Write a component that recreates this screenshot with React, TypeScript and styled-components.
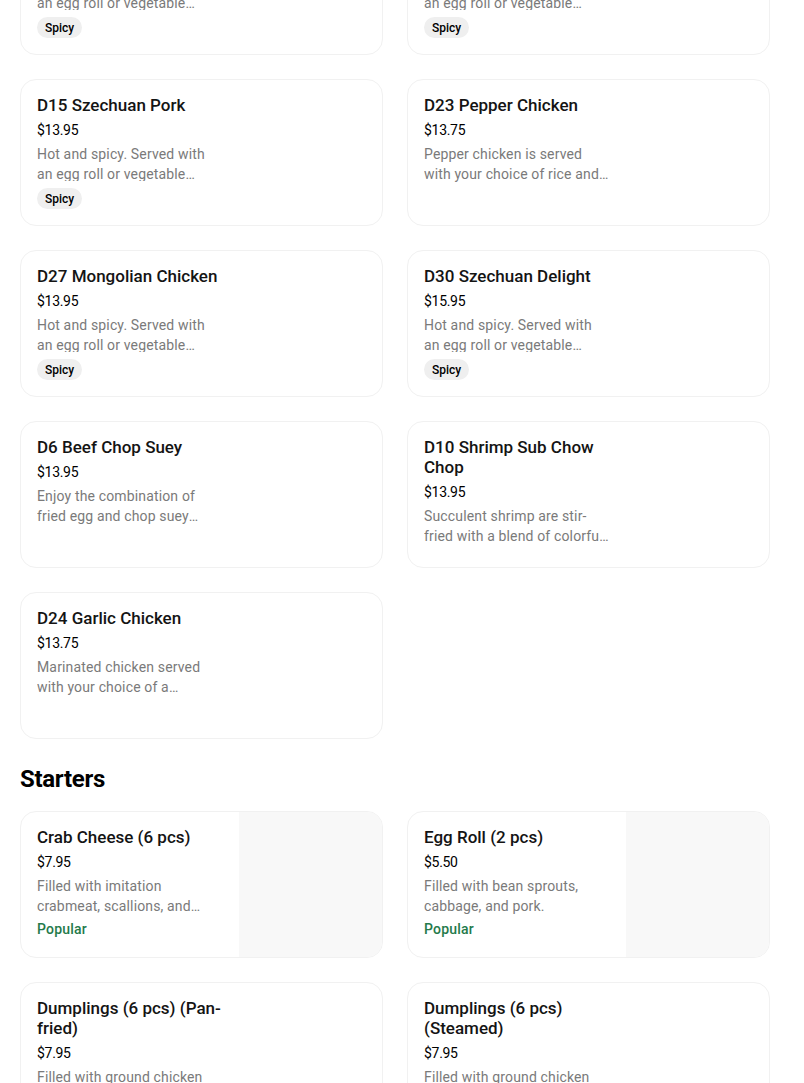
import React from "react";
import styled, { createGlobalStyle } from "styled-components";

const GlobalStyle = createGlobalStyle`
  html, body {
    margin: 0;
    padding: 0;
    background: #ffffff;
    font-family: Roboto, "Liberation Sans", Arial, sans-serif;
    color: #000000;
  }
  * { box-sizing: border-box; }
`;

type Item = {
  name: string;
  price: string;
  desc: string;
  tag?: "spicy" | "popular";
  image?: boolean;
};

const previous: Item[] = [
  { name: "D13 Kung Pao Chicken", price: "$13.95", desc: "Hot and spicy. Served with an egg roll or vegetable spring roll.", tag: "spicy" },
  { name: "D21 Hunan Chicken", price: "$13.95", desc: "Hot and spicy. Served with an egg roll or vegetable spring roll.", tag: "spicy" },
  { name: "D15 Szechuan Pork", price: "$13.95", desc: "Hot and spicy. Served with an egg roll or vegetable spring roll.", tag: "spicy" },
  { name: "D23 Pepper Chicken", price: "$13.75", desc: "Pepper chicken is served with your choice of rice and an egg roll." },
  { name: "D27 Mongolian Chicken", price: "$13.95", desc: "Hot and spicy. Served with an egg roll or vegetable spring roll.", tag: "spicy" },
  { name: "D30 Szechuan Delight", price: "$15.95", desc: "Hot and spicy. Served with an egg roll or vegetable spring roll.", tag: "spicy" },
  { name: "D6 Beef Chop Suey", price: "$13.95", desc: "Enjoy the combination of fried egg and chop suey served over rice." },
  { name: "D10 Shrimp Sub Chow Chop", price: "$13.95", desc: "Succulent shrimp are stir-fried with a blend of colorful vegetables." },
  { name: "D24 Garlic Chicken", price: "$13.75", desc: "Marinated chicken served with your choice of a vegetable and rice." },
];

const starters: Item[] = [
  { name: "Crab Cheese (6 pcs)", price: "$7.95", desc: "Filled with imitation crabmeat, scallions, and cream cheese.", tag: "popular", image: true },
  { name: "Egg Roll (2 pcs)", price: "$5.50", desc: "Filled with bean sprouts, cabbage, and pork.", tag: "popular", image: true },
  { name: "Dumplings (6 pcs) (Pan-fried)", price: "$7.95", desc: "Filled with ground chicken and vegetables." },
  { name: "Dumplings (6 pcs) (Steamed)", price: "$7.95", desc: "Filled with ground chicken and vegetables." },
];

const Page = styled.main`
  display: flex;
  flex-direction: column;
  width: 770px;
  padding-left: 20px;
  margin-top: -92px;
`;

const Grid = styled.ul`
  list-style: none;
  margin: 0;
  padding: 0;
  display: grid;
  grid-template-columns: 1fr 1fr;
  gap: 24px;
`;

const SectionTitle = styled.h2`
  margin: 24px 0 16px;
  font-size: 24px;
  line-height: 32px;
  font-weight: 700;
  letter-spacing: -0.3px;
`;

const Card = styled.li`
  display: flex;
  height: 147px;
  border: 1px solid #f1f1f1;
  border-radius: 16px;
  overflow: hidden;
  background: #ffffff;
`;

const Info = styled.div`
  width: 218px;
  flex: none;
  padding: 15px 16px 16px;
  display: flex;
  flex-direction: column;
  align-items: flex-start;
`;

const Name = styled.div`
  font-size: 17px;
  line-height: 20px;
  font-weight: 500;
  color: #141414;
`;

const Price = styled.div`
  margin-top: 5px;
  font-size: 14px;
  line-height: 20px;
  color: #000000;
  letter-spacing: -0.3px;
`;

const Desc = styled.div`
  margin-top: 4px;
  font-size: 14px;
  line-height: 20px;
  letter-spacing: 0.15px;
  color: #7a7a7a;
  display: -webkit-box;
  -webkit-line-clamp: 2;
  -webkit-box-orient: vertical;
  overflow: hidden;
`;

const SpicyTag = styled.span`
  margin-top: 7px;
  display: inline-flex;
  align-items: center;
  height: 22px;
  padding: 0 8px;
  border-radius: 11px;
  background: #efefef;
  font-size: 12px;
  font-weight: 500;
  color: #000000;
`;

const PopularTag = styled.span`
  margin-top: 3px;
  font-size: 14px;
  line-height: 20px;
  font-weight: 500;
  letter-spacing: 0.2px;
  color: #247a4a;
`;

const Photo = styled.div<{ $show: boolean }>`
  flex: none;
  width: 145px;
  margin-left: auto;
  background: ${(p) => (p.$show ? "#f8f8f8" : "transparent")};
`;

function MenuCard({ item }: { item: Item }) {
  return (
    <Card>
      <Info>
        <Name>{item.name}</Name>
        <Price>{item.price}</Price>
        <Desc>{item.desc}</Desc>
        {item.tag === "spicy" && <SpicyTag>Spicy</SpicyTag>}
        {item.tag === "popular" && <PopularTag>Popular</PopularTag>}
      </Info>
      <Photo $show={!!item.image} />
    </Card>
  );
}

export default function App() {
  return (
    <>
      <GlobalStyle />
      <Page>
        <Grid>
          {previous.map((it) => (
            <MenuCard key={it.name} item={it} />
          ))}
        </Grid>
        <SectionTitle>Starters</SectionTitle>
        <Grid>
          {starters.map((it) => (
            <MenuCard key={it.name} item={it} />
          ))}
        </Grid>
      </Page>
    </>
  );
}
